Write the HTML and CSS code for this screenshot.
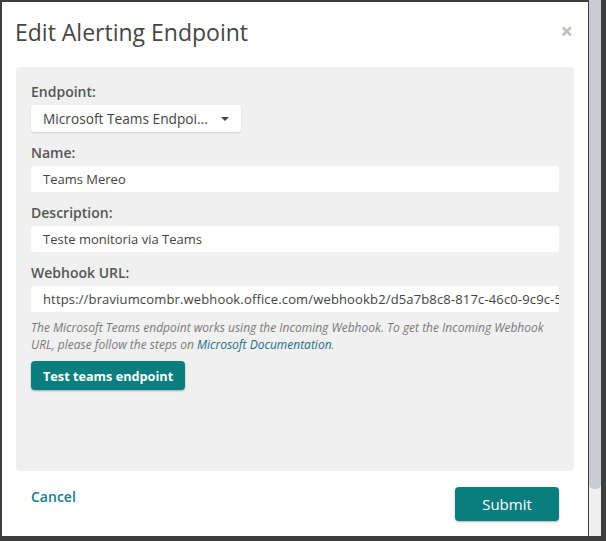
FILE: index.html
```html
<!DOCTYPE html>
<html>
<head>
<meta charset="utf-8">
<link rel="stylesheet" href="styles.css">
</head>
<body>
<div class="screen">
  <div class="modal">
    <div class="modal-header">
      <h1 class="title">Edit Alerting Endpoint</h1>
      <span class="close">&times;</span>
    </div>
    <div class="panel">
      <div class="group">
        <div class="label">Endpoint:</div>
        <div class="select"><span>Microsoft Teams Endpoi...</span><span class="caret"></span></div>
      </div>
      <div class="group">
        <div class="label">Name:</div>
        <div class="field">Teams Mereo</div>
      </div>
      <div class="group">
        <div class="label">Description:</div>
        <div class="field">Teste monitoria via Teams</div>
      </div>
      <div class="group last">
        <div class="label">Webhook URL:</div>
        <div class="field url">https://braviumcombr.webhook.office.com/webhookb2/d5a7b8c8-817c-46c0-9c9c-5f2e8a1b4c7d</div>
      </div>
      <p class="help">The Microsoft Teams endpoint works using the Incoming Webhook. To get the Incoming Webhook URL, please follow the steps on <a class="link">Microsoft Documentation</a>.</p>
      <button class="btn-test">Test teams endpoint</button>
    </div>
    <div class="footer">
      <a class="cancel">Cancel</a>
      <button class="btn-submit">Submit</button>
    </div>
  </div>
  <div class="scrollbar"><div class="thumb"></div></div>
</div>
</body>
</html>
```
FILE: styles.css
```css
* { box-sizing: border-box; }
html, body { margin: 0; padding: 0; }
body {
  background: #3e3e3e;
  font-family: "Open Sans", "Liberation Sans", sans-serif;
  width: 606px;
  height: 541px;
  overflow: hidden;
}
.screen {
  display: flex;
  align-items: flex-start;
  padding: 2px 0 0 2px;
}
.modal {
  width: 586px;
  height: 534px;
  background: #fff;
  padding: 15px 14px 15px 14px;
  display: flex;
  flex-direction: column;
}
.modal-header {
  display: flex;
  justify-content: space-between;
  align-items: center;
  height: 30px;
  margin-bottom: 20px;
}
.title {
  margin: 0 0 0 -1px;
  font-size: 23px;
  line-height: 30px;
  font-weight: 400;
  color: #464646;
}
.close {
  font-size: 22px;
  line-height: 30px;
  font-weight: 700;
  color: #bdbdbd;
  margin-right: 1px;
  margin-top: -5px;
}
.panel {
  height: 404px;
  background: #f0f0f0;
  border-radius: 4px;
  padding: 15px 15px;
}
.group { margin-bottom: 11px; }
.group.last { margin-bottom: 0; }
.label {
  font-size: 14px;
  line-height: 20px;
  font-weight: 600;
  color: #555;
  margin-bottom: 3px;
}
.select {
  margin-top: 1px;
  width: 210px;
  height: 27px;
  background: #fff;
  border-radius: 3px;
  box-shadow: 0 1px 2px rgba(0,0,0,0.12);
  padding: 0 12px;
  display: flex;
  align-items: center;
  justify-content: space-between;
  font-size: 13.7px;
  color: #444;
}
.caret {
  width: 0;
  height: 0;
  border-left: 4px solid transparent;
  border-right: 4px solid transparent;
  border-top: 4px solid #444;
}
.field {
  height: 26px;
  background: #fff;
  border-radius: 3px;
  padding: 0 12px;
  font-size: 13px;
  line-height: 26px;
  color: #444;
  white-space: nowrap;
  overflow: hidden;
}
.field.url { letter-spacing: 0.15px; }
.help {
  margin: 7px 0 0 0;
  font-size: 12px;
  line-height: 17px;
  font-style: italic;
  color: #7a7a7a;
}
.link {
  color: #1e6c8a;
}
.btn-test {
  margin-top: 8px;
  height: 29px;
  padding: 0 12px;
  border: none;
  border-radius: 4px;
  background: #0a7e7f;
  color: #fff;
  font-family: "Open Sans", "Liberation Sans", sans-serif;
  font-size: 12.7px;
  font-weight: 700;
  box-shadow: 0 1px 2px rgba(0,0,0,0.3);
}
.footer {
  margin-top: 16px;
  display: flex;
  justify-content: space-between;
  align-items: flex-start;
}
.cancel {
  padding-left: 15px;
  font-size: 14px;
  line-height: 20px;
  font-weight: 600;
  color: #15807f;
}
.btn-submit {
  width: 104px;
  height: 34px;
  margin-right: 15px;
  border: none;
  border-radius: 4px;
  background: #0a7e7f;
  color: #fff;
  font-family: "Open Sans", "Liberation Sans", sans-serif;
  font-size: 15px;
  font-weight: 400;
  box-shadow: 0 1px 2px rgba(0,0,0,0.3);
}
.scrollbar {
  margin-left: 1px;
  margin-top: -2px;
  width: 12px;
  height: 536px;
  background: #f0f0f0;
}
.thumb {
  height: 489px;
  background: #c9ccd5;
  border-radius: 0 0 5px 5px;
}
```
